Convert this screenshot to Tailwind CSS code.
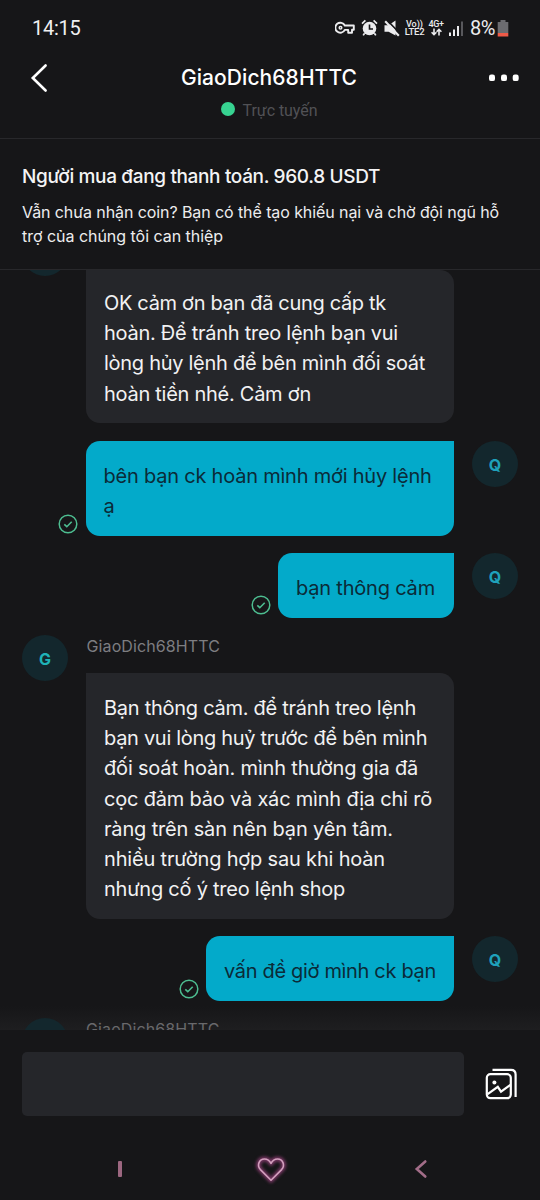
<!DOCTYPE html>
<html lang="vi">
<head>
<meta charset="utf-8">
<meta name="viewport" content="width=device-width, initial-scale=1">
<title>GiaoDich68HTTC</title>
<script src="https://cdn.jsdelivr.net/npm/@tailwindcss/browser@4"></script>
</head>
<body class="bg-[#161618]">
<svg class="hidden">
  <symbol id="check" viewBox="0 0 20 20"><circle cx="10" cy="10" r="8.8" fill="none" stroke="#4dbd90" stroke-width="1.5"/><path d="M6.3 10.4l2.5 2.3 4.9-5" fill="none" stroke="#4dbd90" stroke-width="1.6"/></symbol>
</svg>
<div class="flex h-[1200px] w-[540px] flex-col overflow-hidden bg-[#161618] font-['Inter','Noto_Sans',sans-serif] text-[#f2f2f3]">

  <!-- Status bar -->
  <div class="flex h-[54px] shrink-0 items-center justify-between pr-[31px] pl-[32px] pt-[2px] font-['Roboto',sans-serif]">
    <span class="text-[20px] leading-6 tracking-[-0.25px] text-[#f0f0f1]">14:15</span>
    <div class="flex items-center text-[#ececee]">
      <svg class="h-[14px] w-[20px]" viewBox="0 0 20 14" fill="none" stroke="currentColor" stroke-width="1.9"><path d="M9.8 4.5H18.8V8.7H17V11.8H13.2V8.9H9.8A5 5 0 1 1 9.8 4.5Z" stroke-linejoin="round"/><circle cx="5.5" cy="6.8" r="1.3" stroke-width="1.5"/></svg>
      <svg class="ml-[6px] h-[18px] w-[17px]" viewBox="0 0 17 18"><circle cx="8.5" cy="9.5" r="6.8" fill="currentColor"/><path d="M1 4.6L4.4 1.4M16 4.6L12.6 1.4M3.6 14.2L2.2 16.4M13.4 14.2L14.8 16.4" stroke="currentColor" stroke-width="1.7"/><path d="M8.5 5.4V10H12" fill="none" stroke="#161618" stroke-width="1.6"/></svg>
      <svg class="ml-[6px] h-[17px] w-[16px]" viewBox="0 0 16 17"><path d="M.5 5.2H4.6L11.5 .4V15.6L4.6 11.8H.5Z" fill="currentColor"/><path d="M3 .2L16 13.4" stroke="#161618" stroke-width="1.6"/><path d="M1.2 1.2L14.8 15.8" stroke="currentColor" stroke-width="2.1"/></svg>
      <div class="ml-[4px] flex w-[21px] flex-col items-center text-[9.5px] leading-[8.5px] font-medium"><span class="text-[9px]">Vo))</span><span class="tracking-[-0.2px]">LTE2</span></div>
      <div class="ml-[3px] flex w-[16px] flex-col items-center text-[9px] leading-[8px] font-medium"><span class="tracking-[-0.4px]">4G+</span>
        <svg class="h-[8px] w-[11px]" viewBox="0 0 11 8" fill="none" stroke="currentColor" stroke-width="1.6"><path d="M3 .5V6.5M.6 4.2L3 6.7L5.4 4.2M8 7.5V1.5M5.6 3.8L8 1.3L10.4 3.8"/></svg></div>
      <svg class="ml-[5px] h-[15px] w-[15px]" viewBox="0 0 15 15" fill="currentColor"><rect x="0" y="11.5" width="2" height="3.5"/><rect x="4" y="8.5" width="2" height="6.5"/><rect x="8" y="5" width="2" height="10"/><rect x="12" y="0.5" width="2" height="14.5" fill="#58585c"/></svg>
      <span class="ml-[6px] w-[26px] text-[20px] leading-6 tracking-[-0.6px]">8%</span>
      <svg class="ml-[1px] h-[17px] w-[12px]" viewBox="0 0 12 17"><path d="M3.5 0H8.5V2H11.3V13H.7V2H3.5Z" fill="#6c6c70"/><path d="M.7 13H11.3V16.5H.7Z" fill="#ee5a48"/></svg>
    </div>
  </div>

  <!-- Chat header -->
  <header class="flex h-[85px] shrink-0 justify-between border-b border-[#28282b] pr-[21px] pl-[20px]">
    <svg class="mt-[9px] ml-[9px] h-[30px] w-[20px]" viewBox="0 0 20 30" fill="none" stroke="#fff" stroke-width="2.6"><path d="M16.6 2.5L3.8 15L16.6 27.5" stroke-linecap="round"/></svg>
    <div class="flex flex-col items-center">
      <h1 class="mt-[11px] text-[21px] leading-[26px] font-medium tracking-[0.07px] whitespace-nowrap text-white">GiaoDich68HTTC</h1>
      <div class="mt-[10px] flex items-center gap-[8px] text-[16px] leading-5 text-[#515155]"><span class="mb-[4px] h-[14px] w-[14px] rounded-full bg-[#37d391]"></span><span class="font-['Roboto',sans-serif] tracking-[-0.05px]">Trực tuyến</span></div>
    </div>
    <svg class="mt-[20px] h-[8px] w-[30px]" viewBox="0 0 30 8" fill="#fff"><rect x="0" y=".5" width="6" height="6.6" rx="2.2"/><rect x="12" y=".5" width="6" height="6.6" rx="2.2"/><rect x="23.7" y=".5" width="6" height="6.6" rx="2.2"/></svg>
  </header>

  <!-- Order notice -->
  <section class="flex h-[131px] shrink-0 flex-col border-b border-[#28282b] px-[22px] pt-[25px] whitespace-nowrap">
    <h2 class="text-[19px] leading-[26px] font-medium tracking-[-0.35px] text-[#f4f4f5]">Người mua đang thanh toán. 960.8 USDT</h2>
    <p class="mt-[9.5px] text-[16px] leading-[24.5px] tracking-[-0.09px] text-[#ededee]">Vẫn chưa nhận coin? Bạn có thể tạo khiếu nại và chờ đội ngũ hỗ<br><span class="tracking-[-0.03px]">trợ của chúng tôi can thiệp</span></p>
  </section>

  <!-- Messages -->
  <main class="flex h-[760px] shrink-0 flex-col overflow-hidden px-[22px] text-[20px] leading-[30.2px] whitespace-nowrap">
    <div class="flex shrink-0 items-start gap-[18px]">
      <div class="-mt-[40px] h-[46px] w-[46px] shrink-0 rounded-full bg-[#13272d]"></div>
      <div class="h-[153px] w-[368px] rounded-[14px] rounded-tl-none bg-[#25262a] px-[18px] pt-[18px]">
        <p class="tracking-[-0.33px]">OK cảm ơn bạn đã cung cấp tk</p>
        <p class="tracking-[-0.27px]">hoàn. Để tránh treo lệnh bạn vui</p>
        <p class="tracking-[-0.28px]">lòng hủy lệnh để bên mình đối soát</p>
        <p class="tracking-[-0.27px]">hoàn tiền nhé. Cảm ơn</p>
      </div>
    </div>

    <div class="mt-[18px] flex h-[94.5px] shrink-0 justify-end">
      <svg class="mr-[7.5px] mb-[2px] h-[20px] w-[20px] self-end"><use href="#check"/></svg>
      <div class="w-[368px] rounded-[14px] rounded-tr-none bg-[#03aaca] px-[18px] pt-[20px] text-[#0b2b38]">
        <p class="tracking-[-0.22px]">bên bạn ck hoàn mình mới hủy lệnh</p>
        <p>ạ</p>
      </div>
      <div class="ml-[18.5px] flex h-[46px] w-[46px] shrink-0 items-center justify-center rounded-full bg-[#13272d] pt-[2px] text-[16px] font-bold text-[#1fa2bb]">Q</div>
    </div>

    <div class="mt-[17.5px] flex h-[64.5px] shrink-0 justify-end">
      <svg class="mr-[7px] mb-[2.5px] h-[20px] w-[20px] self-end"><use href="#check"/></svg>
      <div class="w-[175.5px] rounded-[14px] rounded-tr-none bg-[#03aaca] px-[18px] pt-[20px] text-[#0b2b38]">
        <p class="tracking-[-0.2px]">bạn thông cảm</p>
      </div>
      <div class="ml-[18.5px] flex h-[46px] w-[46px] shrink-0 items-center justify-center rounded-full bg-[#13272d] pt-[2px] text-[16px] font-bold text-[#1fa2bb]">Q</div>
    </div>

    <div class="mt-[17.5px] flex shrink-0 items-start gap-[18px]">
      <div class="flex h-[46px] w-[46px] shrink-0 items-center justify-center rounded-full bg-[#13272d] pt-[2px] text-[16px] font-bold text-[#1fb3b8]">G</div>
      <div class="flex flex-col">
        <span class="h-[38px] pl-[0.5px] text-[16px] leading-[23px] tracking-[0.11px] text-[#7d7d81]">GiaoDich68HTTC</span>
        <div class="h-[246px] w-[368px] rounded-[14px] rounded-tl-none bg-[#25262a] px-[18px] pt-[20px]">
          <p class="tracking-[-0.27px]">Bạn thông cảm. để tránh treo lệnh</p>
          <p class="tracking-[-0.3px]">bạn vui lòng huỷ trước để bên mình</p>
          <p class="tracking-[-0.18px]">đối soát hoàn. mình thường gia đã</p>
          <p class="tracking-[-0.2px]">cọc đảm bảo và xác mình địa chỉ rõ</p>
          <p class="tracking-[-0.16px]">ràng trên sàn nên bạn yên tâm.</p>
          <p class="tracking-[-0.18px]">nhiều trường hợp sau khi hoàn</p>
          <p class="tracking-[-0.24px]">nhưng cố ý treo lệnh shop</p>
        </div>
      </div>
    </div>

    <div class="mt-[17px] flex h-[65px] shrink-0 justify-end">
      <svg class="mr-[7px] mb-[2px] h-[20px] w-[20px] self-end"><use href="#check"/></svg>
      <div class="w-[247.5px] rounded-[14px] rounded-tr-none bg-[#03aaca] px-[18px] pt-[20px] text-[#0b2b38]">
        <p class="tracking-[-0.33px]">vấn đề giờ mình ck bạn</p>
      </div>
      <div class="ml-[18.5px] flex h-[46px] w-[46px] shrink-0 items-center justify-center rounded-full bg-[#13272d] pt-[2px] text-[16px] font-bold text-[#1fa2bb]">Q</div>
    </div>

    <div class="-mx-[22px] mt-[5px] flex h-[24px] shrink-0 gap-[18px] overflow-hidden bg-linear-to-b from-[#161618] to-[#1e1e20] px-[22px] pt-[12px]">
      <div class="h-[46px] w-[46px] shrink-0 rounded-full bg-[#13272d]"></div>
      <span class="text-[16px] leading-[23px] tracking-[0.11px] text-[#69696c]">GiaoDich68HTTC</span>
    </div>
  </main>

  <!-- Composer -->
  <footer class="flex h-[107px] shrink-0 items-start pt-[22px] pl-[21.5px]">
    <div class="h-[64px] w-[442px] rounded-[5px] bg-[#25262a]"></div>
    <svg class="mt-[16px] ml-[21px] h-[34px] w-[34px]" viewBox="0 0 34 34" fill="none" stroke="#fff" stroke-width="2.2"><rect x="1.8" y="6.2" width="24" height="24" rx="3.6"/><path d="M7.5 1.8H26Q30.6 1.8 30.6 6.4V29M2.6 26.2L12.8 18.8L16 23.6L25.4 16.8"/><circle cx="9.4" cy="14.4" r="2" fill="#fff" stroke="none"/></svg>
  </footer>

  <!-- System navigation -->
  <nav class="flex h-[64px] shrink-0 items-center justify-between pr-[112px] pl-[118px]">
    <span class="h-[16px] w-[4px] rounded-[1px] bg-[#9c6780]"></span>
    <svg class="ml-[5px] h-[36px] w-[40px]" viewBox="0 0 40 36" fill="none" stroke-linejoin="round">
      <g class="blur-[1.5px]"><path d="M20 29.2L9.4 18.6C5.4 14 8.4 8 13.4 8C16.6 8 18.8 10 20 12.4C21.2 10 23.4 8 26.6 8C31.6 8 34.6 14 30.6 18.6Z" stroke="#743560" stroke-width="5"/></g>
      <path d="M20 29.2L9.4 18.6C5.4 14 8.4 8 13.4 8C16.6 8 18.8 10 20 12.4C21.2 10 23.4 8 26.6 8C31.6 8 34.6 14 30.6 18.6Z" stroke="#d3a0be" stroke-width="1.6"/>
    </svg>
    <svg class="h-[20px] w-[14px]" viewBox="0 0 14 20" fill="none" stroke="#a26d88" stroke-width="2.6" stroke-linecap="round"><path d="M11.3 2.5L2.8 10L11.3 17.5"/></svg>
  </nav>
</div>
</body>
</html>
